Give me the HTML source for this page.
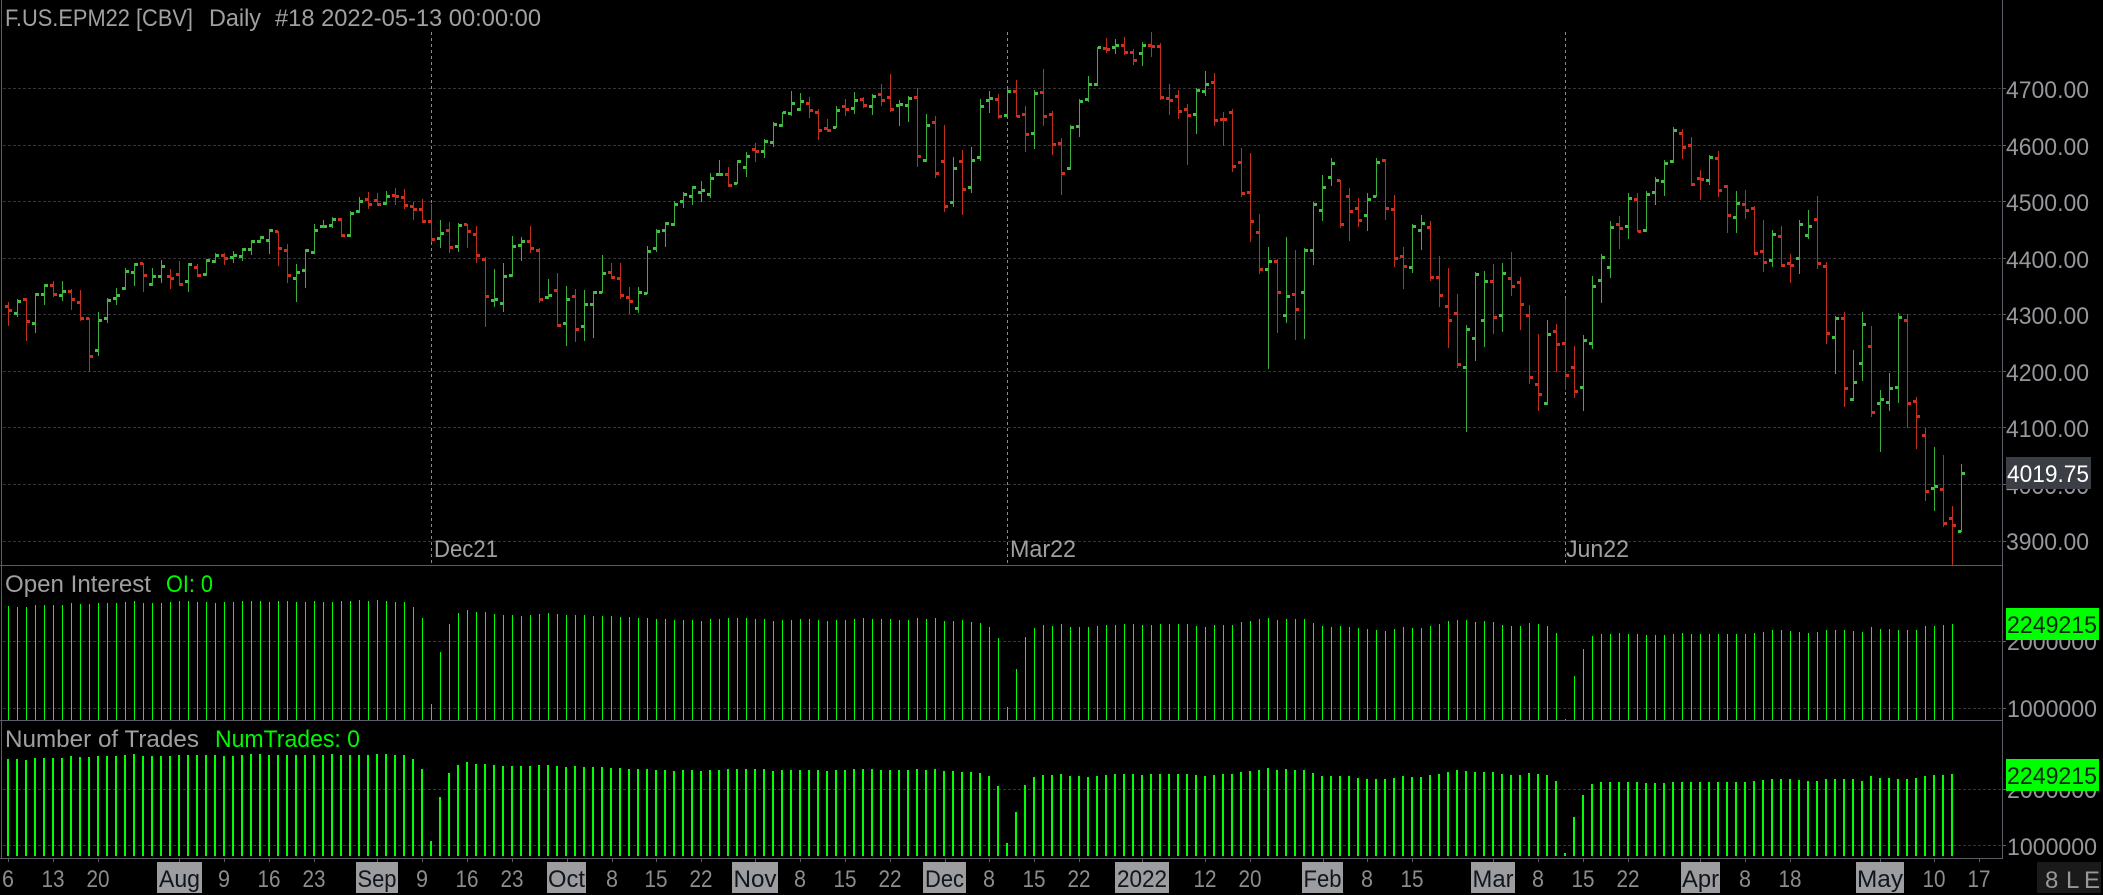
<!DOCTYPE html>
<html><head><meta charset="utf-8"><title>F.US.EPM22</title>
<style>
html,body{margin:0;padding:0;background:#000;width:2103px;height:895px;overflow:hidden}
svg{display:block;position:absolute;left:0;top:0}
text{font-family:"Liberation Sans",sans-serif;font-size:24px;fill:#a0a0a2;white-space:pre}
.g{fill:#00f800}
.a{fill:#97979c}
.d{fill:#8c8c8e}
.t{fill:#10161e}
</style></head><body>
<svg id="c" width="2103" height="895" viewBox="0 0 2103 895" xmlns="http://www.w3.org/2000/svg">
<g id="grid" shape-rendering="crispEdges" fill="none">
<g stroke="#353538" stroke-width="1" stroke-dasharray="3 2">
<path d="M3 88.5H2002M3 145.5H2002M3 201.5H2002M3 258.5H2002M3 314.5H2002M3 371.5H2002M3 427.5H2002M3 484.5H2002M3 541.5H2002"/>
<path d="M3 641.5H2002M3 708.5H2002M3 789.5H2002M3 845.5H2002"/>
</g>
<path stroke="#8a8a8a" stroke-dasharray="3 3" d="M431.5 32V565M1007.5 32V565M1565.5 32V565"/>
</g>
<g id="bars" shape-rendering="crispEdges"></g>
<g shape-rendering="crispEdges" stroke="#5c5c66" fill="none">
<path d="M1.5 0V858"/>
<path d="M2002.5 0V858"/>
<path d="M0 565.5H2003M0 720.5H2003M0 858.5H2003"/>
<path d="M8.5 858V862M53.5 858V862M98.5 858V862M179.5 858V862M224.5 858V862M269.5 858V862M314.5 858V862M377.5 858V862M422.5 858V862M467.5 858V862M512.5 858V862M567.5 858V862M612.5 858V862M656.5 858V862M701.5 858V862M755.5 858V862M800.5 858V862M845.5 858V862M890.5 858V862M945.5 858V862M989.5 858V862M1034.5 858V862M1079.5 858V862M1142.5 858V862M1205.5 858V862M1250.5 858V862M1323.5 858V862M1367.5 858V862M1412.5 858V862M1493.5 858V862M1538.5 858V862M1583.5 858V862M1628.5 858V862M1700.5 858V862M1745.5 858V862M1790.5 858V862M1880.5 858V862M1934.5 858V862M1979.5 858V862"/>
<path d="M2002 88.5H2006M2002 145.5H2006M2002 201.5H2006M2002 258.5H2006M2002 314.5H2006M2002 371.5H2006M2002 427.5H2006M2002 484.5H2006M2002 541.5H2006M2002 641.5H2006M2002 708.5H2006M2002 789.5H2006M2002 845.5H2006"/>
</g>

<text x="5" y="26" textLength="188" lengthAdjust="spacingAndGlyphs">F.US.EPM22 [CBV]</text>
<text x="209" y="26" textLength="52" lengthAdjust="spacingAndGlyphs">Daily</text>
<text x="275" y="26" textLength="266" lengthAdjust="spacingAndGlyphs">#18 2022-05-13 00:00:00</text>

<text x="434" y="557" textLength="64" lengthAdjust="spacingAndGlyphs">Dec21</text>
<text x="1010" y="557" textLength="66" lengthAdjust="spacingAndGlyphs">Mar22</text>
<text x="1566" y="557" textLength="63" lengthAdjust="spacingAndGlyphs">Jun22</text>

<text x="5" y="592" textLength="146" lengthAdjust="spacingAndGlyphs">Open Interest</text>
<text x="166" y="592" textLength="47" lengthAdjust="spacingAndGlyphs" class="g">OI: 0</text>
<text x="5" y="747" textLength="194" lengthAdjust="spacingAndGlyphs">Number of Trades</text>
<text x="215" y="747" textLength="145" lengthAdjust="spacingAndGlyphs" class="g">NumTrades: 0</text>

<g class="prices">
<text class="a" x="2006" y="98" textLength="83" lengthAdjust="spacingAndGlyphs">4700.00</text>
<text class="a" x="2006" y="155" textLength="83" lengthAdjust="spacingAndGlyphs">4600.00</text>
<text class="a" x="2006" y="211" textLength="83" lengthAdjust="spacingAndGlyphs">4500.00</text>
<text class="a" x="2006" y="268" textLength="83" lengthAdjust="spacingAndGlyphs">4400.00</text>
<text class="a" x="2006" y="324" textLength="83" lengthAdjust="spacingAndGlyphs">4300.00</text>
<text class="a" x="2006" y="381" textLength="83" lengthAdjust="spacingAndGlyphs">4200.00</text>
<text class="a" x="2006" y="437" textLength="83" lengthAdjust="spacingAndGlyphs">4100.00</text>
<text class="a" x="2006" y="494" textLength="83" lengthAdjust="spacingAndGlyphs">4000.00</text>
<text class="a" x="2006" y="550" textLength="83" lengthAdjust="spacingAndGlyphs">3900.00</text>
</g>
<rect x="2006" y="457" width="85" height="32" fill="#3c3e46"/>
<text x="2007" y="482" textLength="82" lengthAdjust="spacingAndGlyphs" style="fill:#fff">4019.75</text>

<text class="a" x="2007" y="650" textLength="90" lengthAdjust="spacingAndGlyphs">2000000</text>
<text class="a" x="2007" y="717" textLength="90" lengthAdjust="spacingAndGlyphs">1000000</text>
<rect x="2006" y="608" width="93" height="32" fill="#00ff00"/>
<text x="2007" y="633" textLength="90" lengthAdjust="spacingAndGlyphs" style="fill:#0a2a10">2249215</text>

<text class="a" x="2007" y="798" textLength="90" lengthAdjust="spacingAndGlyphs">2000000</text>
<text class="a" x="2007" y="855" textLength="90" lengthAdjust="spacingAndGlyphs">1000000</text>
<rect x="2006" y="759" width="93" height="32" fill="#00ff00"/>
<text x="2007" y="784" textLength="90" lengthAdjust="spacingAndGlyphs" style="fill:#0a2a10">2249215</text>

<g fill="#9d9d9f" shape-rendering="crispEdges">
<rect x="157" y="862" width="45" height="31"/><rect x="356" y="862" width="42" height="31"/><rect x="547" y="862" width="39" height="31"/><rect x="732" y="862" width="46" height="31"/><rect x="923" y="862" width="43" height="31"/><rect x="1115" y="862" width="54" height="31"/><rect x="1302" y="862" width="41" height="31"/><rect x="1471" y="862" width="44" height="31"/><rect x="1681" y="862" width="39" height="31"/><rect x="1856" y="862" width="48" height="31"/>
</g>
<g text-anchor="middle">
<text class="d" x="8" y="887" textLength="12" lengthAdjust="spacingAndGlyphs">6</text>
<text class="d" x="53" y="887" textLength="23" lengthAdjust="spacingAndGlyphs">13</text>
<text class="d" x="98" y="887" textLength="23" lengthAdjust="spacingAndGlyphs">20</text>
<text class="t" x="179.500" y="887" textLength="41" lengthAdjust="spacingAndGlyphs">Aug</text>
<text class="d" x="224" y="887" textLength="12" lengthAdjust="spacingAndGlyphs">9</text>
<text class="d" x="269" y="887" textLength="23" lengthAdjust="spacingAndGlyphs">16</text>
<text class="d" x="314" y="887" textLength="23" lengthAdjust="spacingAndGlyphs">23</text>
<text class="t" x="377" y="887" textLength="39" lengthAdjust="spacingAndGlyphs">Sep</text>
<text class="d" x="422" y="887" textLength="12" lengthAdjust="spacingAndGlyphs">9</text>
<text class="d" x="467" y="887" textLength="23" lengthAdjust="spacingAndGlyphs">16</text>
<text class="d" x="512" y="887" textLength="23" lengthAdjust="spacingAndGlyphs">23</text>
<text class="t" x="566.500" y="887" textLength="37" lengthAdjust="spacingAndGlyphs">Oct</text>
<text class="d" x="612" y="887" textLength="12" lengthAdjust="spacingAndGlyphs">8</text>
<text class="d" x="656" y="887" textLength="23" lengthAdjust="spacingAndGlyphs">15</text>
<text class="d" x="701" y="887" textLength="23" lengthAdjust="spacingAndGlyphs">22</text>
<text class="t" x="755" y="887" textLength="43" lengthAdjust="spacingAndGlyphs">Nov</text>
<text class="d" x="800" y="887" textLength="12" lengthAdjust="spacingAndGlyphs">8</text>
<text class="d" x="845" y="887" textLength="23" lengthAdjust="spacingAndGlyphs">15</text>
<text class="d" x="890" y="887" textLength="23" lengthAdjust="spacingAndGlyphs">22</text>
<text class="t" x="944.500" y="887" textLength="39" lengthAdjust="spacingAndGlyphs">Dec</text>
<text class="d" x="989" y="887" textLength="12" lengthAdjust="spacingAndGlyphs">8</text>
<text class="d" x="1034" y="887" textLength="23" lengthAdjust="spacingAndGlyphs">15</text>
<text class="d" x="1079" y="887" textLength="23" lengthAdjust="spacingAndGlyphs">22</text>
<text class="t" x="1142" y="887" textLength="50" lengthAdjust="spacingAndGlyphs">2022</text>
<text class="d" x="1205" y="887" textLength="23" lengthAdjust="spacingAndGlyphs">12</text>
<text class="d" x="1250" y="887" textLength="23" lengthAdjust="spacingAndGlyphs">20</text>
<text class="t" x="1322.500" y="887" textLength="38" lengthAdjust="spacingAndGlyphs">Feb</text>
<text class="d" x="1367" y="887" textLength="12" lengthAdjust="spacingAndGlyphs">8</text>
<text class="d" x="1412" y="887" textLength="23" lengthAdjust="spacingAndGlyphs">15</text>
<text class="t" x="1493" y="887" textLength="41" lengthAdjust="spacingAndGlyphs">Mar</text>
<text class="d" x="1538" y="887" textLength="12" lengthAdjust="spacingAndGlyphs">8</text>
<text class="d" x="1583" y="887" textLength="23" lengthAdjust="spacingAndGlyphs">15</text>
<text class="d" x="1628" y="887" textLength="23" lengthAdjust="spacingAndGlyphs">22</text>
<text class="t" x="1700.500" y="887" textLength="37" lengthAdjust="spacingAndGlyphs">Apr</text>
<text class="d" x="1745" y="887" textLength="12" lengthAdjust="spacingAndGlyphs">8</text>
<text class="d" x="1790" y="887" textLength="23" lengthAdjust="spacingAndGlyphs">18</text>
<text class="t" x="1880" y="887" textLength="46" lengthAdjust="spacingAndGlyphs">May</text>
<text class="d" x="1934" y="887" textLength="23" lengthAdjust="spacingAndGlyphs">10</text>
<text class="d" x="1979" y="887" textLength="23" lengthAdjust="spacingAndGlyphs">17</text>
</g>
<rect x="2037" y="862" width="64" height="31" fill="#1a1a1a"/>
<text x="2045" y="888" class="a">8</text>
<text x="2066" y="888" class="a">L</text>
<text x="2084" y="888" class="a">E</text>
</svg>
<script>
var P=[[918,930,905,978],[940,903,898,950],[898,963,895,1023],[970,883,878,998],[882,857,852,915],[855,882,843,890],[885,873,843,902],[873,898,868,930],[907,955,870,962],[955,1069,955,1115],
[1050,960,936,1068],[955,900,895,968],[895,886,863,915],[865,813,805,870],[817,793,790,858],[790,826,788,875],[853,829,805,858],[829,798,780,848],[828,835,808,867],[823,853,783,858],
[844,793,790,875],[802,826,793,832],[822,781,777,828],[784,767,760,788],[767,775,758,795],[772,766,753,788],[768,748,745,783],[748,723,720,765],[723,712,708,730],[720,690,686,762],
[695,745,692,798],[752,826,733,848],[835,818,793,905],[811,752,748,863],[757,690,672,762],[679,679,660,685],[676,658,652,685],[658,706,655,712],[706,640,632,710],[635,603,590,640],
[598,613,576,626],[601,613,580,618],[610,590,574,615],[586,589,565,615],[592,616,568,628],[620,628,607,660],[628,664,598,670],[664,718,612,725],[715,700,660,745],[691,742,667,758],
[739,676,670,755],[673,694,672,743],[703,767,678,788],[778,889,772,980],[901,898,807,920],[910,829,790,935],[826,739,708,830],[736,724,712,782],[724,745,678,760],[751,898,745,910],
[892,886,837,897],[871,976,818,980],[970,898,858,1037],[889,988,867,1025],[979,913,870,1023],[913,877,873,1013],[877,820,765,880],[817,832,790,838],[835,886,790,897],[892,904,860,942],
[925,877,862,938],[880,755,738,882],[745,693,688,755],[691,670,666,742],[673,613,603,678],[604,583,576,625],[589,562,558,615],[578,571,543,605],[583,535,519,595],[523,523,480,528],
[523,556,501,560],[550,484,480,553],[502,469,457,530],[448,454,430,485],[454,424,418,473],[427,373,367,440],[376,337,335,380],[341,310,273,347],[328,304,280,333],[310,331,292,354],
[337,391,327,420],[385,391,358,396],[382,331,318,385],[319,328,297,348],[325,301,277,342],[298,316,292,325],[319,289,282,345],[283,301,252,318],[292,328,222,335],[316,313,300,378],
[316,295,288,366],[292,469,265,501],[481,376,342,487],[367,520,349,533],[484,619,375,636],[607,505,472,621],[484,568,450,645],[562,481,441,579],[472,319,297,484],[301,295,273,340],
[298,349,282,358],[347,274,262,352],[274,349,240,352],[343,403,318,457],[400,280,270,447],[277,349,207,378],[343,433,333,465],[430,520,414,585],[505,382,376,510],[379,304,297,411],
[298,253,228,306],[253,142,140,258],[145,148,113,160],[142,136,117,163],[136,157,111,165],[157,181,148,195],[160,136,126,198],[136,139,96,170],[139,292,129,300],[295,301,252,345],
[289,334,270,357],[328,346,312,495],[343,271,265,402],[274,253,213,288],[247,361,219,378],[358,359,336,438],[337,499,327,516],[487,580,444,591],[577,664,459,726],[697,808,642,822],
[808,784,741,1107],[784,877,777,998],[946,889,711,968],[883,928,750,1019],[877,751,744,1016],[751,613,607,795],[631,562,526,663],[532,490,475,558],[541,674,541,683],[589,634,565,723],
[625,661,595,681],[646,598,579,693],[589,487,475,592],[481,625,478,660],[628,775,585,801],[769,799,741,867],[802,679,672,818],[691,670,646,750],[682,832,664,842],[832,886,768,922],
[919,961,804,1043],[940,1093,883,1105],[1102,988,975,1295],[1015,823,817,1082],[961,844,814,1040],[844,952,792,1002],[946,820,789,995],[835,859,756,888],[847,913,832,990],[946,1132,915,1152],
[1153,1183,1002,1232],[1210,1003,960,1215],[994,1033,973,1115],[1030,1126,897,1170],[1102,1174,1038,1193],[1162,1021,1005,1232],[1030,859,829,1047],[841,772,763,910],[802,682,664,833],[673,685,649,747],
[679,595,580,717],[598,694,580,697],[691,583,574,697],[577,541,532,615],[544,490,481,588],[484,391,382,490],[400,442,388,477],[436,553,411,558],[535,538,511,600],[541,472,466,555],
[475,571,453,591],[559,646,556,699],[652,610,573,699],[613,631,570,657],[625,760,619,766],[754,787,661,816],[781,703,691,800],[709,796,678,800],[790,796,763,849],[775,673,661,822],
[706,679,631,717],[658,790,589,807],[799,1000,787,1032],[1012,955,949,1122],[955,1165,937,1221],[1198,1147,1050,1203],[1090,973,937,1143],[1039,1237,979,1250],[1210,1197,1170,1355],[1207,1165,1120,1232],
[1162,952,940,1208],[961,1210,943,1283],[1204,1249,1190,1347],[1306,1474,1284,1503],[1465,1459,1341,1533],[1468,1570,1365,1581],[1555,1576,1518,1696],[1594,1420,1392,1597]];
var OA=[198,201,201,195,196,195,195,190,192,192,189,189,190,186,184,190,189,189,186,183,183,186,186,189,186,186,184,183,183,186,183,183,186,186,183,186,186,183,183,181,183,181,184,186,186,
201,234,492,336,252,219,210,216,216,222,225,225,228,225,222,219,222,225,225,225,228,228,228,231,231,234,234,237,237,240,240,240,
243,237,237,234,234,234,237,237,243,240,240,237,237,240,243,240,240,237,234,237,237,237,240,240,234,237,234,
243,243,240,246,250,261,294,501,387,291,264,
255,258,252,261,261,261,258,255,255,252,252,255,255,252,252,252,252,258,261,255,255,255,246,243,237,234,
240,237,237,237,249,258,261,258,261,264,267,270,273,267];
var OB=[696,699,699,693,687,678,675,675,681,678,681,690,693,693,684,687,693,714,972,843,762,723,717,717,714,717,717,720,720,720,717,714,717,717,717,717,717,717,717,714,711,705,705,708,711,714,711,705,705,705,708,711,696,702,702,705,705,705,693,693,690,687];
var TA=[657,657,660,654,654,654,654,648,651,651,648,648,648,645,642,648,648,648,648,645,645,645,645,645,648,648,645,642,642,645,645,645,645,645,645,645,642,645,645,645,645,642,642,645,645,
657,687,903,771,699,675,666,672,672,675,678,678,678,678,675,675,678,681,678,681,681,681,684,684,687,687,687,690,690,693,690,690,
693,690,690,687,687,687,687,687,693,690,690,690,690,690,693,690,690,687,687,687,690,690,690,690,687,690,687,
693,693,696,696,699,708,738,909,816,735,711,
705,705,702,708,708,711,708,705,702,702,702,705,702,702,702,702,702,705,708,705,702,702,696,693,690,684,
690,687,690,690,699,708,708,708,708,714,717,717,717,714];
var TB=[1143,1146,1146,1140,1137,1131,1125,1128,1131,1131,1131,1137,1140,1140,1134,1137,1140,1158,1374,1266,1200,1167,1161,1161,1161,1161,1161,1164,1164,1164,1161,1161,1161,1161,1161,1161,1161,1161,1161,1158,1155,1152,1152,1152,1155,1158,1158,1152,1152,1152,1152,1158,1143,1149,1149,1152,1152,1149,1143,1140,1140,1137];
function r(x,y,w,h,f){return '<rect x="'+x+'" y="'+y+'" width="'+w+'" height="'+h+'" fill="'+f+'"/>';}
var s='',i,R=Math.round;
for(i=0;i<P.length;i++){
 var p=P[i],x=8+9*i,up=p[1]<=p[0],tc=up?'#44c044':'#d03220',vc=up?'#3cb03c':'#c02e1e';
 var h=R(p[2]/3),l=R(p[3]/3);
 if(l>565)l=565;
 s+=r(x,h,1,l-h,vc);
 s+=r(x-3,R(p[0]/3-1.5),3,3,tc);
 s+=r(x+1,R(p[1]/3-1.5),3,3,tc);
}
function col(a,base,start,bot,w,dx,f){
 for(var j=0;j<a.length;j++){
  var top=R(base+a[j]/3),xx=8+9*(j+start)+dx;
  if(bot>top)s+=r(xx,top,w,bot-top,f);
 }
}
col(OA,540,0,720,1,0,'#00ff00');
col(OB,395,155,720,1,0,'#00ff00');
col(TA,540,0,856,2,-1,'#00ff00');
col(TB,395,155,856,2,-1,'#00ff00');
document.getElementById('bars').innerHTML=s;
</script>
</body></html>
